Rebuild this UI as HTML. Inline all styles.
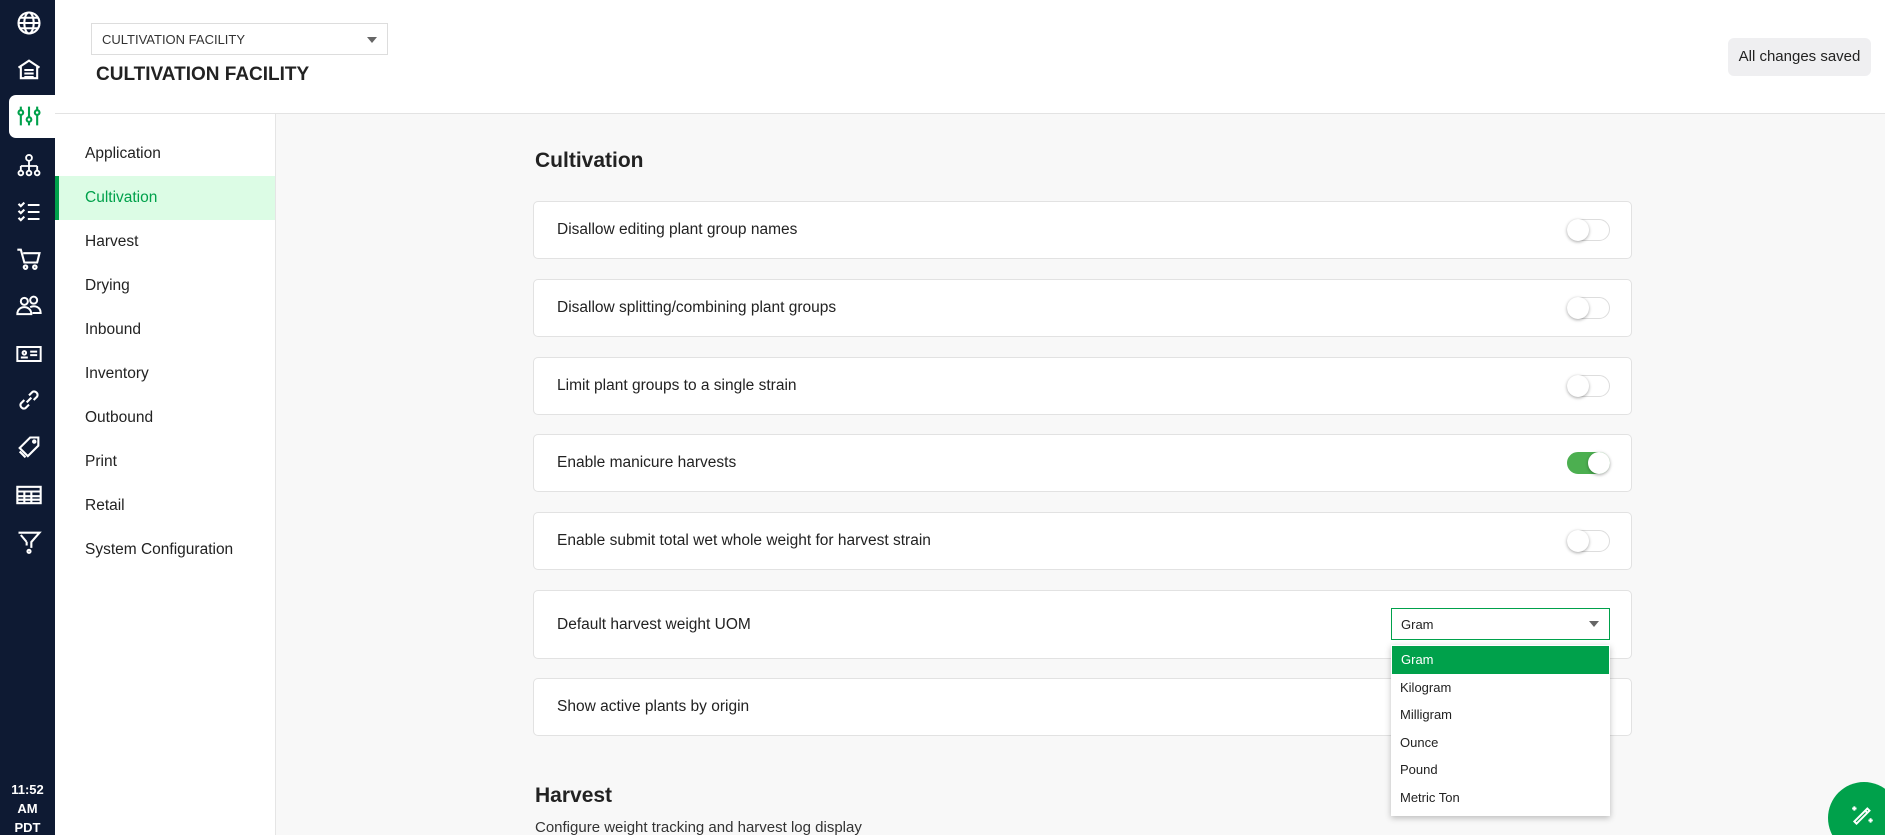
<!DOCTYPE html>
<html><head><style>
*{box-sizing:border-box;margin:0;padding:0}
html,body{width:1885px;height:835px;overflow:hidden}
body{font-family:"Liberation Sans",sans-serif;background:#f8f8f8;color:#222}
#w{position:relative;width:1885px;height:835px;overflow:hidden;background:#f8f8f8}
.side{position:absolute;left:0;top:0;width:55px;height:835px;background:#0e1a33}
.ic{position:absolute;left:15px;width:28px;height:28px}
.act{position:absolute;left:9px;top:95px;width:46px;height:43px;background:#fff;border-radius:7px 0 0 7px}
.time{position:absolute;left:0;width:55px;text-align:center;color:#fff;font-weight:bold;font-size:13px}
.head{position:absolute;left:55px;top:0;width:1830px;height:114px;background:#fff;border-bottom:1px solid #e3e3e3}
.sel{position:absolute;left:91px;top:23px;width:297px;height:32px;border:1px solid #ddd;font-size:13px;padding:8px 10px;color:#333}
.sel:after{content:"";position:absolute;right:10px;top:13px;border:5px solid transparent;border-top:6px solid #666}
.title{position:absolute;left:96px;top:64px;font-size:19px;font-weight:bold;color:#222}
.saved{position:absolute;left:1728px;top:38px;width:143px;height:38px;background:#efeff1;border-radius:6px;font-size:15px;line-height:38px;text-align:center;color:#222}
.nav{position:absolute;left:55px;top:114px;width:221px;height:721px;background:#fff;border-right:1px solid #e5e5e5}
.nav div{height:44px;line-height:44px;padding-left:30px;font-size:15.5px;color:#222}
.nav .on{background:#dcfce5;color:#00a14b;border-left:4px solid #00a14b;padding-left:26px}
h2{position:absolute;left:535px;font-size:21px;font-weight:bold;color:#222}
.card{position:absolute;left:533px;width:1099px;height:58px;background:#fff;border:1px solid #e2e2e2;border-radius:5px;font-size:15.5px;padding-left:23px;display:flex;align-items:center}
.tg{position:absolute;right:21px;top:17px;width:43px;height:22px;border:1px solid #ddd;border-radius:11px;background:#fff}
.tg:before{content:"";position:absolute;left:-1px;top:-1px;width:22px;height:22px;border-radius:50%;background:#fff;box-shadow:0 1px 3px rgba(0,0,0,.35)}
.tg.on{background:#4caf50;border-color:#4caf50}
.tg.on:before{left:20px}
.usel{position:absolute;left:1391px;top:608px;width:219px;height:32px;border:1px solid #00a14b;background:#fff;font-size:13px;padding:8px 9px}
.usel:after{content:"";position:absolute;right:10px;top:12px;border:5px solid transparent;border-top:6px solid #666}
.dd{position:absolute;left:1391px;top:645px;width:219px;height:171px;background:#fff;box-shadow:0 2px 6px rgba(0,0,0,.25);font-size:13px;padding-top:1px}
.dd div{height:27.5px;line-height:27.5px;padding-left:9px;color:#222}
.dd .h{background:#00a14b;color:#fff;margin:0 1px}
.fab{position:absolute;left:1828px;top:782px;width:72px;height:72px;border-radius:50%;background:#00a14b}
</style></head><body><div id="w">
<div class="side">
<div class="act"></div>
<svg class="ic" style="top:9px" viewBox="0 0 24 24" fill="none" stroke="#fff" stroke-width="1.8"><circle cx="12" cy="12" r="9"/><ellipse cx="12" cy="12" rx="4" ry="9"/><path d="M3 12h18M4.5 7.5h15M4.5 16.5h15"/></svg>
<svg class="ic" style="top:56px" viewBox="0 0 24 24" fill="none" stroke="#fff" stroke-width="1.8"><path d="M3 10l9-6 9 6M5 9v10h14V9M8 12h8M8 15h8M8 18h8"/></svg>
<svg class="ic" style="top:102px" viewBox="0 0 24 24" fill="none" stroke="#00a14b" stroke-width="1.8"><path d="M5 4v16M12 4v16M19 4v16"/><circle cx="5" cy="9" r="2" fill="#fff"/><circle cx="12" cy="15" r="2" fill="#fff"/><circle cx="19" cy="9" r="2" fill="#fff"/></svg>
<svg class="ic" style="top:152px" viewBox="0 0 24 24" fill="none" stroke="#fff" stroke-width="1.6"><circle cx="12" cy="5" r="2.5"/><path d="M12 8v4M5 12h14M5 12v4M12 12v4M19 12v4"/><circle cx="5" cy="18" r="2"/><circle cx="12" cy="18" r="2"/><circle cx="19" cy="18" r="2"/></svg>
<svg class="ic" style="top:198px" viewBox="0 0 24 24" fill="none" stroke="#fff" stroke-width="1.8"><path d="M3 5l2 2 3-3M3 11l2 2 3-3M3 17l2 2 3-3M11 6h10M11 12h10M11 18h10"/></svg>
<svg class="ic" style="top:245px" viewBox="0 0 24 24" fill="none" stroke="#fff" stroke-width="1.8"><path d="M2 4h3l3 11h11l2-8H7"/><circle cx="9" cy="19" r="1.5"/><circle cx="17" cy="19" r="1.5"/></svg>
<svg class="ic" style="top:292px" viewBox="0 0 24 24" fill="none" stroke="#fff" stroke-width="1.7"><circle cx="8" cy="8" r="3"/><circle cx="16" cy="7" r="3"/><path d="M2 19c0-4 3-6 6-6s6 2 6 6zM13 13c4-2 9 0 9 5h-7"/></svg>
<svg class="ic" style="top:340px" viewBox="0 0 24 24" fill="none" stroke="#fff" stroke-width="1.7"><rect x="2" y="6" width="20" height="12"/><circle cx="8" cy="11" r="1.5"/><path d="M5 15h6M13 10h6M13 13h6"/></svg>
<svg class="ic" style="top:386px" viewBox="0 0 24 24" fill="none" stroke="#fff" stroke-width="1.8"><path d="M10 14l4-4M8 12l-3 3a3 3 0 004 4l3-3M16 12l3-3a3 3 0 00-4-4l-3 3"/></svg>
<svg class="ic" style="top:434px" viewBox="0 0 24 24" fill="none" stroke="#fff" stroke-width="1.8"><path d="M13 3h7v7l-9 9-7-7zM4 15l5 5"/><circle cx="16.5" cy="6.5" r="1"/></svg>
<svg class="ic" style="top:481px" viewBox="0 0 24 24" fill="none" stroke="#fff" stroke-width="1.8"><rect x="2" y="5" width="20" height="14"/><path d="M2 9h20M2 13h20M2 16h20M8 9v10M14 9v10"/></svg>
<svg class="ic" style="top:528px" viewBox="0 0 24 24" fill="none" stroke="#fff" stroke-width="1.8"><path d="M3 4h18l-7 8v5M10 12L5 6M10 12v3"/><circle cx="12" cy="20" r="1.3"/></svg>
<div class="time" style="top:782px">11:52</div>
<div class="time" style="top:801px">AM</div>
<div class="time" style="top:820px">PDT</div>
</div>
<div class="head"></div>
<div class="sel">CULTIVATION FACILITY</div>
<div class="title">CULTIVATION FACILITY</div>
<div class="saved">All changes saved</div>
<div class="nav"><div style="margin-top:18px">Application</div><div class="on">Cultivation</div><div>Harvest</div><div>Drying</div><div>Inbound</div><div>Inventory</div><div>Outbound</div><div>Print</div><div>Retail</div><div>System Configuration</div></div>
<h2 style="top:149px">Cultivation</h2>
<div class="card" style="top:201px">Disallow editing plant group names<span class="tg"></span></div>
<div class="card" style="top:279px">Disallow splitting/combining plant groups<span class="tg"></span></div>
<div class="card" style="top:357px">Limit plant groups to a single strain<span class="tg"></span></div>
<div class="card" style="top:434px">Enable manicure harvests<span class="tg on"></span></div>
<div class="card" style="top:512px">Enable submit total wet whole weight for harvest strain<span class="tg"></span></div>
<div class="card" style="top:590px;height:69px">Default harvest weight UOM</div>
<div class="card" style="top:678px">Show active plants by origin</div>
<div class="usel">Gram</div>
<div class="dd"><div class="h">Gram</div><div>Kilogram</div><div>Milligram</div><div>Ounce</div><div>Pound</div><div>Metric Ton</div></div>
<h2 style="top:784px">Harvest</h2>
<div style="position:absolute;left:535px;top:819px;font-size:15px;color:#333">Configure weight tracking and harvest log display</div>
<div class="fab"><svg style="position:absolute;left:22px;top:20px" width="26" height="26" viewBox="0 0 24 24" fill="none" stroke="#fff" stroke-width="1.8"><path d="M6 20l12-12-2-2L4 18zM14 8l2 2M4 4v4M2 6h4M19 15v4M17 17h4"/></svg></div>
</div></body></html>
